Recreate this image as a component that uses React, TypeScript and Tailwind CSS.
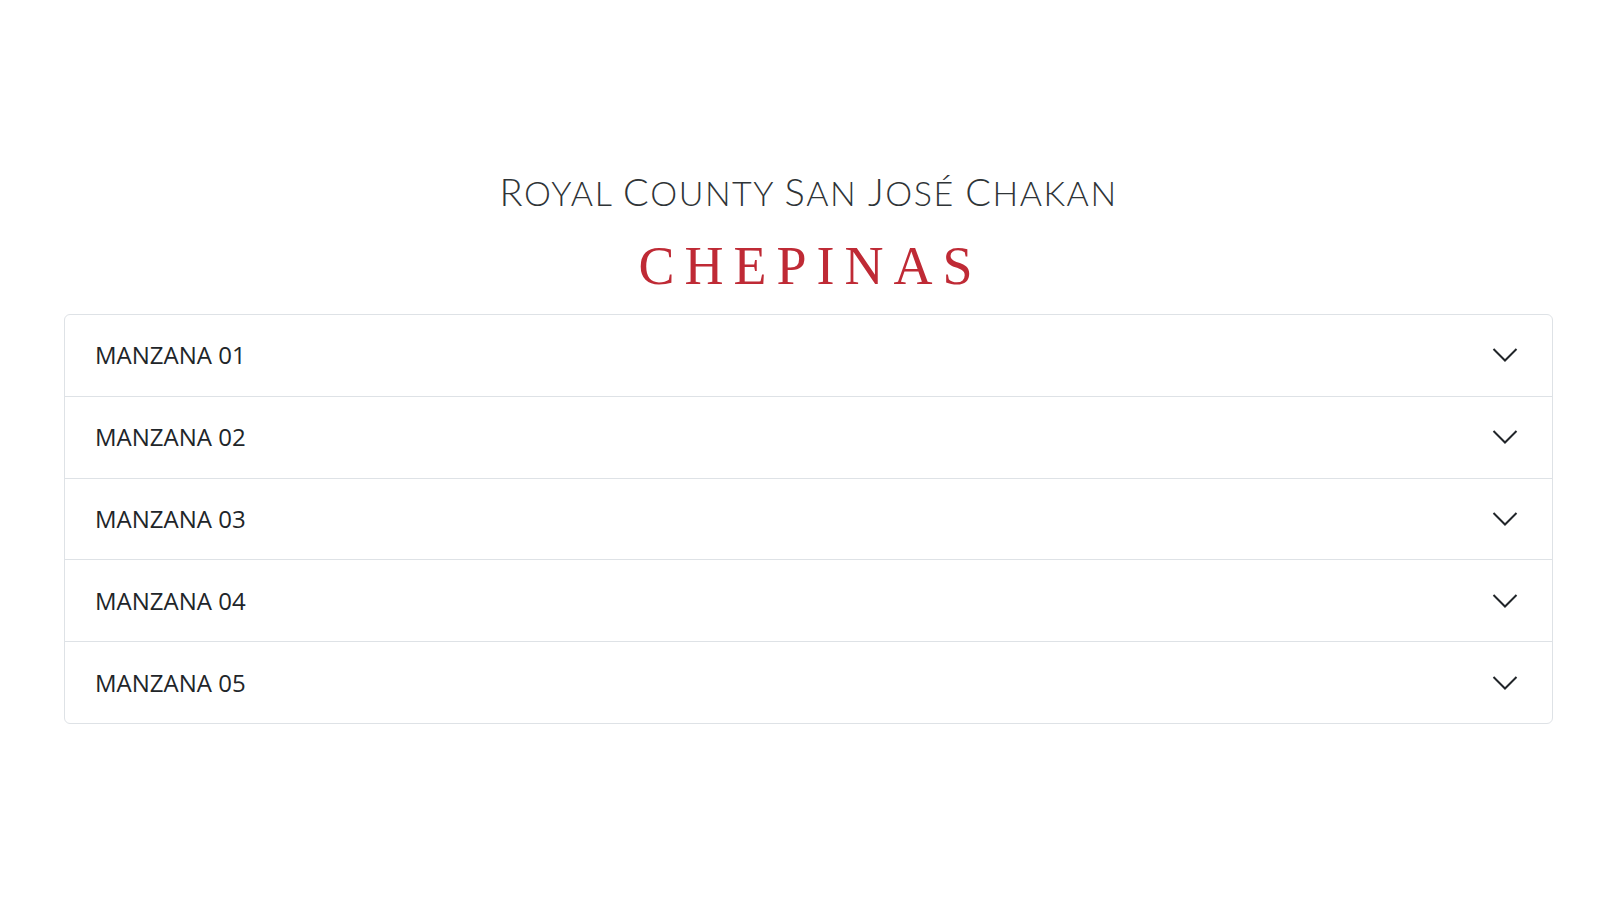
import React, { useState } from 'react';

const blocks = ['MANZANA 01', 'MANZANA 02', 'MANZANA 03', 'MANZANA 04', 'MANZANA 05'];

function Chevron({ open }: { open: boolean }) {
  return (
    <svg
      width="26"
      height="16"
      viewBox="0 0 26 16"
      fill="none"
      className={open ? 'rotate-180 transition-transform' : 'transition-transform'}
    >
      <polyline points="1.5,2 13,13.5 24.5,2" stroke="#212529" strokeWidth="2" strokeLinejoin="miter" />
    </svg>
  );
}

export default function App() {
  const [open, setOpen] = useState<number | null>(null);

  return (
    <div className="min-h-screen bg-white pl-[64px] pr-[47px] pt-[172px]">
      {/* Heading */}
      <div className="flex flex-col items-center">
        <h2 className="text-[#2f3437] text-[34px] font-light uppercase tracking-[1.5px] leading-none font-['Lato','Liberation_Sans',sans-serif]">
          <span className="text-[38px]">R</span>oyal <span className="text-[38px]">C</span>ounty{' '}
          <span className="text-[38px]">S</span>an <span className="text-[38px]">J</span>osé{' '}
          <span className="text-[38px]">C</span>hakan
        </h2>
        <h1 className="mt-[29px] text-[#bf2a35] text-[54px] leading-none tracking-[10px] pl-[4px] font-['Liberation_Serif','DejaVu_Serif',serif]">
          CHEPINAS
        </h1>
      </div>

      {/* Blocks accordion */}
      <div className="mt-[21px] border border-[#dee2e6] rounded-[6px] bg-white">
        {blocks.map((label, i) => (
          <div key={label} className={i > 0 ? 'border-t border-[#dee2e6]' : ''}>
            <button
              onClick={() => setOpen(open === i ? null : i)}
              className="w-full h-[80.8px] flex items-center justify-between pl-[30px] pr-[34px] text-left"
            >
              <span className="text-[24px] text-[#212529] font-['Open_Sans','Noto_Sans',sans-serif]">{label}</span>
              <Chevron open={open === i} />
            </button>
            {open === i && (
              <div className="px-[30px] pb-[20px] text-[16px] text-[#212529] font-['Open_Sans',sans-serif]">
                Lotes disponibles en {label.toLowerCase()}.
              </div>
            )}
          </div>
        ))}
      </div>
    </div>
  );
}
